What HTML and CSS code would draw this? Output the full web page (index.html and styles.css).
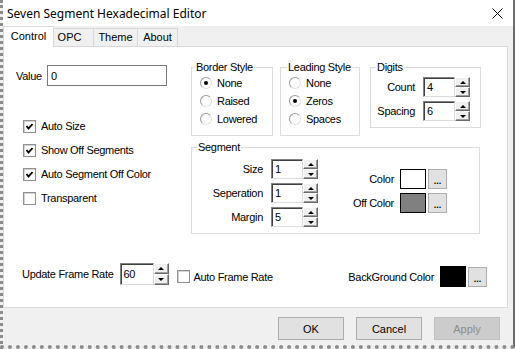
FILE: index.html
```html
<!DOCTYPE html>
<html lang="en">
<head>
  <meta charset="UTF-8" />
  <title>Seven Segment Hexadecimal Editor</title>
  <link rel="stylesheet" href="styles.css">
</head>
<body>
  <div class="window">
    <div class="titlebar">
      <span class="title">Seven Segment Hexadecimal Editor</span>
      <svg class="close" width="11" height="11" viewBox="0 0 11 11">
        <path d="M0.5 0.5L10.5 10.5M10.5 0.5L0.5 10.5" stroke="#000" stroke-width="1" fill="none"/>
      </svg>
    </div>

    <div class="tabs">
      <div class="tab active">Control</div>
      <div class="tab tab-opc">OPC</div>
      <div class="tab tab-theme">Theme</div>
      <div class="tab tab-about">About</div>
    </div>

    <div class="panel">
      <div class="main">
        <div class="left">
          <div class="value-row">
            <span class="value-label">Value</span>
            <div class="edit flat value-edit">0</div>
          </div>
          <div class="checks">
            <div class="check-row"><span class="check"><svg width="11" height="11" viewBox="0 0 11 11"><polyline points="2.5,5 4.5,7.5 8.5,3" stroke="#000" stroke-width="1.8" fill="none"/></svg></span>Auto Size</div>
            <div class="check-row"><span class="check"><svg width="11" height="11" viewBox="0 0 11 11"><polyline points="2.5,5 4.5,7.5 8.5,3" stroke="#000" stroke-width="1.8" fill="none"/></svg></span>Show Off Segments</div>
            <div class="check-row"><span class="check"><svg width="11" height="11" viewBox="0 0 11 11"><polyline points="2.5,5 4.5,7.5 8.5,3" stroke="#000" stroke-width="1.8" fill="none"/></svg></span>Auto Segment Off Color</div>
            <div class="check-row"><span class="check"></span>Transparent</div>
          </div>
        </div>

        <div class="right">
          <div class="top-groups">
            <fieldset class="group border-style">
              <legend>Border Style</legend>
              <div class="radio-row"><span class="radio on"></span>None</div>
              <div class="radio-row"><span class="radio"></span>Raised</div>
              <div class="radio-row"><span class="radio"></span>Lowered</div>
            </fieldset>

            <fieldset class="group leading-style">
              <legend>Leading Style</legend>
              <div class="radio-row"><span class="radio"></span>None</div>
              <div class="radio-row"><span class="radio on"></span>Zeros</div>
              <div class="radio-row"><span class="radio"></span>Spaces</div>
            </fieldset>

            <fieldset class="group digits">
              <legend>Digits</legend>
              <div class="spin-row">
                <span class="spin-label">Count</span>
                <div class="spin"><div class="edit">4</div><div class="spin-btns"><span class="up"></span><span class="down"></span></div></div>
              </div>
              <div class="spin-row">
                <span class="spin-label">Spacing</span>
                <div class="spin"><div class="edit">6</div><div class="spin-btns"><span class="up"></span><span class="down"></span></div></div>
              </div>
            </fieldset>
          </div>

          <fieldset class="group segment">
            <legend>Segment</legend>
            <div class="seg-body">
              <div class="seg-spins">
                <div class="spin-row">
                  <span class="spin-label">Size</span>
                  <div class="spin"><div class="edit">1</div><div class="spin-btns"><span class="up"></span><span class="down"></span></div></div>
                </div>
                <div class="spin-row">
                  <span class="spin-label">Seperation</span>
                  <div class="spin"><div class="edit">1</div><div class="spin-btns"><span class="up"></span><span class="down"></span></div></div>
                </div>
                <div class="spin-row">
                  <span class="spin-label">Margin</span>
                  <div class="spin"><div class="edit">5</div><div class="spin-btns"><span class="up"></span><span class="down"></span></div></div>
                </div>
              </div>
              <div class="seg-colors">
                <div class="color-row">
                  <span class="color-label">Color</span>
                  <span class="swatch white"></span>
                  <span class="dots">...</span>
                </div>
                <div class="color-row">
                  <span class="color-label">Off Color</span>
                  <span class="swatch gray"></span>
                  <span class="dots">...</span>
                </div>
              </div>
            </div>
          </fieldset>
        </div>
      </div>

      <div class="bottom-row">
        <span class="rate-label">Update Frame Rate</span>
        <div class="spin rate-spin"><div class="edit">60</div><div class="spin-btns"><span class="up"></span><span class="down"></span></div></div>
        <div class="check-row auto-rate"><span class="check"></span>Auto Frame Rate</div>
        <div class="bg-color">
          <span class="bg-label">BackGround Color</span>
          <span class="swatch black"></span>
          <span class="dots">...</span>
        </div>
      </div>
    </div>

    <div class="footer">
      <button class="btn">OK</button>
      <button class="btn">Cancel</button>
      <button class="btn disabled">Apply</button>
    </div>
  </div>
</body>
</html>
```

FILE: styles.css
```css
* {
  box-sizing: border-box;
}

body {
  margin: 0;
  background: #fff;
  font-family: "Liberation Sans", Arial, sans-serif;
  font-size: 11px;
  letter-spacing: -0.3px;
  color: #000;
}

.window {
  width: 515px;
  height: 349px;
  background: #f0f0f0;
  border-left: 3px dotted #8c8c8c;
  border-right: 2px solid #6d6d6d;
  border-bottom: 4px dotted #8c8c8c;
  display: flex;
  flex-direction: column;
}

/* title bar */
.titlebar {
  height: 26px;
  flex: none;
  background: #fff;
  display: flex;
  align-items: center;
  padding: 0 10px 0 4px;
}

.title {
  font-family: "Noto Sans", sans-serif;
  font-size: 12px;
  letter-spacing: 0;
}

.close {
  margin-left: auto;
}

/* tabs */
.tabs {
  height: 20px;
  flex: none;
  display: flex;
  align-items: flex-end;
}

.tab {
  height: 18px;
  border: 1px solid #d9d9d9;
  border-bottom: none;
  background: #f0f0f0;
  margin-left: -1px;
  text-align: center;
  line-height: 17px;
  letter-spacing: 0;
}

.tab.active {
  position: relative;
  z-index: 1;
  width: 51px;
  height: 21px;
  margin-left: 0;
  margin-bottom: -1px;
  background: #fff;
  line-height: 19px;
}

.tab-opc {
  width: 41px;
  padding-right: 8px;
}

.tab-theme {
  width: 45px;
}

.tab-about {
  width: 41px;
}

/* panel */
.panel {
  width: 505px;
  height: 262px;
  flex: none;
  background: #fff;
  border: 1px solid #d9d9d9;
}

.main {
  display: flex;
}

.left {
  width: 187px;
  flex: none;
  padding: 18px 0 0 12px;
}

.value-row {
  display: flex;
  align-items: center;
}

.value-label {
  width: 31px;
}

.edit {
  background: #fff;
  border: 1px solid;
  border-color: #828282 #dcdcdc #dcdcdc #828282;
  box-shadow: inset 1px 1px #404040;
  display: flex;
  align-items: center;
  padding-left: 3px;
}

.edit.flat {
  border: 1px solid #7a7a7a;
  box-shadow: none;
}

.value-edit {
  width: 120px;
  height: 21px;
}

.checks {
  margin-top: 28px;
  padding-left: 7px;
}

.check-row {
  height: 24px;
  display: flex;
  align-items: center;
  gap: 5px;
}

.check {
  width: 13px;
  height: 13px;
  background: #fff;
  border: 1px solid #8f8f8f;
  box-shadow: inset 1px 1px #d4d4d4;
  display: flex;
  align-items: center;
  justify-content: center;
}

.right {
  padding-top: 14px;
}

.top-groups {
  display: flex;
  align-items: flex-start;
}

.group {
  margin: 0;
  padding: 0;
  min-width: 0;
  border: 1px solid #dcdcdc;
}

.group legend {
  padding: 0 1px;
  margin-left: 3px;
  line-height: 13px;
}

.border-style {
  width: 82px;
  height: 75px;
}

.leading-style {
  width: 80px;
  height: 75px;
  margin-left: 7px;
}

.leading-style legend {
  margin-left: 6px;
}

.radio-row {
  height: 18px;
  display: flex;
  align-items: center;
  gap: 5px;
  padding-left: 8px;
}

.radio {
  width: 12px;
  height: 12px;
  border-radius: 50%;
  background: #fff;
  border: 1px solid;
  border-color: #9a9a9a #e0e0e0 #e0e0e0 #9a9a9a;
  display: flex;
  align-items: center;
  justify-content: center;
}

.radio.on::after {
  content: "";
  width: 4px;
  height: 4px;
  border-radius: 50%;
  background: #000;
}

.digits {
  width: 111px;
  height: 67px;
  margin-left: 10px;
  padding-top: 3px;
}

.digits legend {
  margin-left: 5px;
}

.digits .spin-row {
  padding-left: 4px;
}

.digits .spin-label {
  width: 40px;
}

.spin-row {
  display: flex;
  align-items: center;
  height: 20px;
  margin-bottom: 4px;
}

.spin-label {
  text-align: right;
  margin-right: 8px;
  flex: none;
}

.spin {
  display: flex;
  height: 20px;
}

.spin .edit {
  width: 32px;
  height: 100%;
}

.spin-btns {
  width: 15px;
  display: flex;
  flex-direction: column;
}

.spin-btns span {
  flex: 1;
  background: #f0f0f0;
  border: 1px solid;
  border-color: #fff #696969 #696969 #fff;
  box-shadow: inset -1px -1px #a0a0a0;
  display: flex;
  align-items: center;
  justify-content: center;
}

.spin-btns .up::after {
  content: "";
  border-left: 3px solid transparent;
  border-right: 3px solid transparent;
  border-bottom: 3px solid #000;
}

.spin-btns .down::after {
  content: "";
  border-left: 3px solid transparent;
  border-right: 3px solid transparent;
  border-top: 3px solid #000;
}

/* segment group */
.segment {
  width: 289px;
  height: 93px;
  margin-top: 5px;
}

.segment legend {
  margin-left: 5px;
}

.seg-body {
  display: flex;
  padding-top: 5px;
}

.seg-spins .spin-label {
  width: 71px;
}

.seg-colors {
  margin: 10px 0 0 20px;
}

.color-row {
  display: flex;
  align-items: center;
  height: 20px;
  margin-bottom: 4px;
}

.color-label {
  width: 56px;
  text-align: right;
  margin-right: 6px;
}

.swatch {
  width: 26px;
  height: 20px;
  border: 1px solid #000;
  margin-right: 2px;
}

.swatch.white {
  background: #fff;
}

.swatch.gray {
  background: #808080;
}

.swatch.black {
  background: #000;
  height: 21px;
}

.dots {
  width: 19px;
  height: 20px;
  overflow: hidden;
  background: #e1e1e1;
  border: 1px solid #adadad;
  font-weight: bold;
  font-size: 9px;
  letter-spacing: 0;
  text-align: center;
  line-height: 22px;
}

/* bottom row */
.bottom-row {
  display: flex;
  align-items: center;
  height: 24px;
  margin-top: 28px;
  padding: 0 20px 0 18px;
}

.rate-label {
  margin-right: 6px;
}

.rate-spin {
  height: 22px;
}

.rate-spin .edit {
  width: 34px;
}

.auto-rate {
  margin-left: 8px;
  gap: 4px;
  padding-top: 5px;
}

.bg-color {
  margin-left: auto;
  display: flex;
  align-items: center;
  padding-top: 5px;
}

.bg-label {
  margin-right: 6px;
}

/* dialog buttons */
.footer {
  flex: none;
  height: 37px;
  display: flex;
  justify-content: flex-end;
  align-items: flex-start;
  gap: 12px;
  padding: 9px 13px 0 0;
}

.btn {
  width: 66px;
  height: 23px;
  background: #e1e1e1;
  border: 1px solid #adadad;
  font-family: "Liberation Sans", Arial, sans-serif;
  font-size: 11px;
  color: #000;
  padding: 0;
}

.btn.disabled {
  background: #cccccc;
  border-color: #bfbfbf;
  color: #8d8d8d;
}
```
